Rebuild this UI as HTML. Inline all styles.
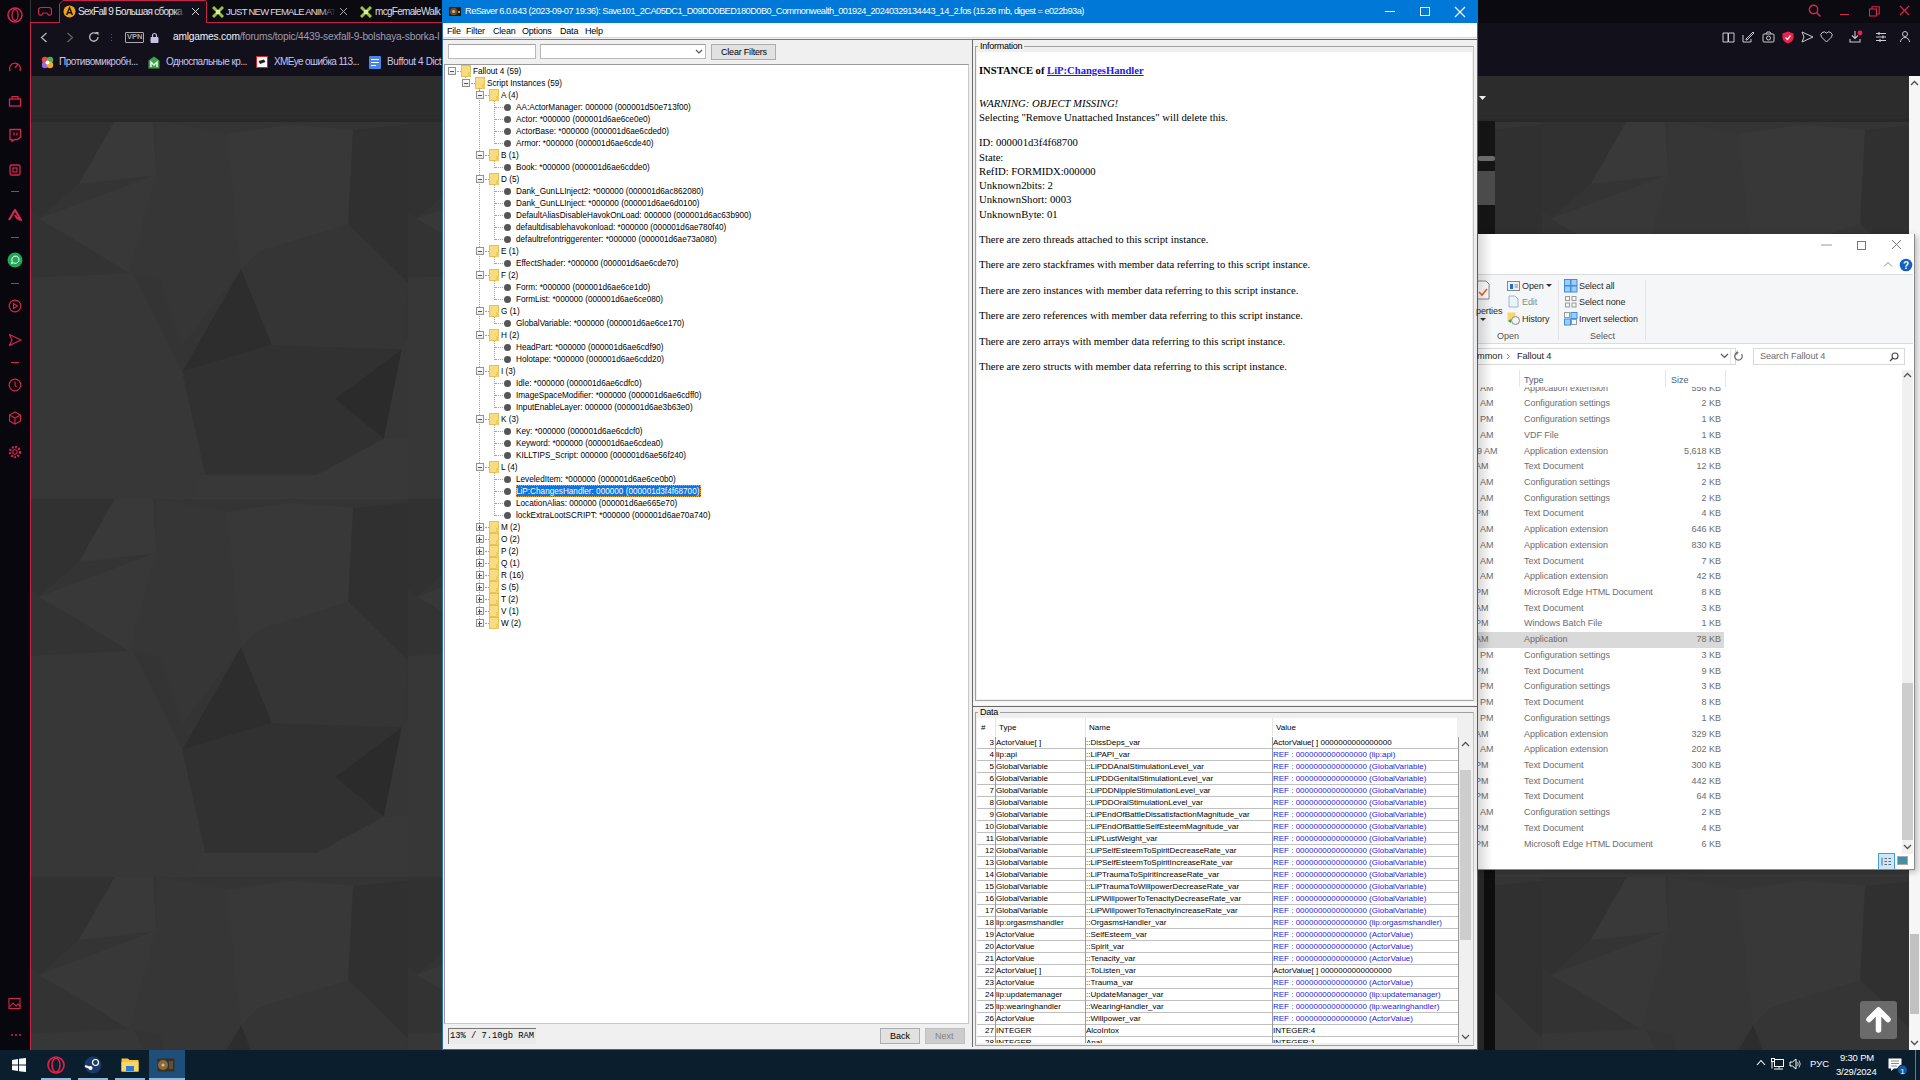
<!DOCTYPE html>
<html><head><meta charset="utf-8">
<style>
*{margin:0;padding:0;box-sizing:border-box}
html,body{width:1920px;height:1080px;overflow:hidden;background:#333;font-family:"Liberation Sans",sans-serif}
.a{position:absolute}
div,span{white-space:nowrap}
.t{position:absolute;line-height:12px}
</style></head><body>

<div class="a" style="left:30px;top:76px;width:1890px;height:974px;background:#343434;overflow:hidden">
<svg class="a" style="left:0;top:0" width="1890" height="974"><defs><pattern id="pp" patternUnits="userSpaceOnUse" x="0" y="45" width="378" height="378">
<rect width="378" height="378" fill="#343434"/>
<polygon fill="#313131" points="0,0 85,0 49,63 9,98 0,90"/>
<polygon fill="#393939" points="49,63 126,54 123,0 85,0"/>
<polygon fill="#383838" points="9,98 126,54 99,152 49,121"/>
<polygon fill="#363636" points="126,0 197,13 211,148 152,224 130,157 99,152 126,54"/>
<polygon fill="#383838" points="197,13 260,4 323,9 318,103 229,130 211,148"/>
<polygon fill="#303030" points="323,9 412,0 412,157 377,161 318,103"/>
<polygon fill="#353535" points="211,148 229,130 318,103 377,161 372,228 242,224"/>
<polygon fill="#2d2d2d" points="211,148 242,224 152,251"/>
<polygon fill="#313131" points="152,251 242,224 372,228 354,318 287,354 175,354"/>
<polygon fill="#2b2b2b" points="305,278 372,228 354,318"/>
<polygon fill="#373737" points="0,157 103,152 152,251 175,354 117,439 0,439"/>
<polygon fill="#383838" points="175,354 287,354 354,318 412,314 412,439 117,439"/>
<polygon fill="#333333" points="0,90 9,98 49,121 99,152 103,152 0,157"/>
<polygon fill="#363636" points="372,228 412,157 412,314 354,318"/>
</pattern></defs><rect x="0" y="45" width="1890" height="929" fill="url(#pp)"/>
<rect x="0" y="0" width="1890" height="45" fill="#2c2c2c"/><rect x="0" y="43" width="1890" height="3" fill="#292929"/></svg></div>
<div class="a" style="left:0;top:0;width:30px;height:1050px;background:#08070d"></div>
<div class="a" style="left:30px;top:22px;width:1px;height:1028px;background:#c8214a"></div>
<div class="a" style="left:31px;top:0;width:1889px;height:23px;background:#0b0a11"></div>
<div class="a" style="left:31px;top:23px;width:1889px;height:53px;background:#12111b"></div>
<div class="a" style="left:30px;top:22px;width:29px;height:1px;background:#c8214a"></div>
<div class="a" style="left:206px;top:22px;width:240px;height:1px;background:#c8214a"></div>
<svg class="a" style="left:59px;top:0px" width="148" height="23"><path d="M0.5 23V4L4 0.5H146.5L147.5 1.5V23" fill="#12111b" stroke="#c8214a" stroke-width="1"/></svg>
<svg class="a" style="left:7px;top:7px" width="16" height="16"><ellipse cx="8" cy="8" rx="7" ry="7" stroke="#d8264f" stroke-width="1.5" fill="none"/><ellipse cx="8" cy="8" rx="3" ry="5.5" stroke="#d8264f" stroke-width="1.3" fill="none"/></svg>
<svg class="a" style="left:8px;top:60px" width="14" height="14"><path d="M2 11A5.5 5.5 0 1 1 12 11" stroke="#d8264f" stroke-width="1.3" fill="none"/><path d="M7 8L10 4" stroke="#d8264f" stroke-width="1.3"/></svg>
<svg class="a" style="left:8px;top:94px" width="14" height="14"><rect x="1.5" y="5" width="11" height="7" stroke="#d8264f" stroke-width="1.3" fill="none"/><path d="M4 5V2.5H10V5" stroke="#d8264f" stroke-width="1.2" fill="none"/></svg>
<svg class="a" style="left:8px;top:128px" width="14" height="14"><path d="M2 1.5H12.5V9L9.5 11.5H6.5L4 13.5V11.5H2Z" stroke="#d8264f" stroke-width="1.3" fill="none"/><path d="M6 4.5V7.5M9 4.5V7.5" stroke="#d8264f" stroke-width="1.3"/></svg>
<svg class="a" style="left:8px;top:163px" width="14" height="14"><rect x="2" y="2" width="10" height="10" rx="1.5" stroke="#d8264f" stroke-width="1.3" fill="none"/><rect x="5" y="5" width="4" height="4" stroke="#d8264f" stroke-width="1.2" fill="none"/></svg>
<div class="a" style="left:11px;top:191px;width:8px;height:1px;background:#d8264f"></div>
<svg class="a" style="left:8px;top:208px" width="14" height="14"><path d="M1 12L7 2L13 12L9 10L7 7" stroke="#d8264f" stroke-width="2.2" fill="none" stroke-linejoin="round"/></svg>
<div class="a" style="left:11px;top:237px;width:8px;height:1px;background:#d8264f"></div>
<svg class="a" style="left:7px;top:252px" width="16" height="16"><circle cx="8" cy="8" r="7.5" fill="#1fa855"/><path d="M4.5 11.5L5.2 9.3A3.6 3.6 0 1 1 6.6 10.8Z" stroke="#fff" stroke-width="1" fill="none"/></svg>
<div class="a" style="left:11px;top:283px;width:8px;height:1px;background:#d8264f"></div>
<svg class="a" style="left:8px;top:299px" width="14" height="14"><circle cx="7" cy="7" r="5.8" stroke="#d8264f" stroke-width="1.2" fill="none"/><path d="M5.5 4.5L9.5 7L5.5 9.5Z" stroke="#d8264f" stroke-width="1.1" fill="none"/></svg>
<svg class="a" style="left:8px;top:333px" width="14" height="14"><path d="M1.5 1.5L13 7L1.5 12.5L4 7Z" stroke="#d8264f" stroke-width="1.2" fill="none" stroke-linejoin="round"/></svg>
<div class="a" style="left:11px;top:362px;width:8px;height:1px;background:#d8264f"></div>
<svg class="a" style="left:8px;top:378px" width="14" height="14"><circle cx="7" cy="7" r="5.8" stroke="#d8264f" stroke-width="1.2" fill="none"/><path d="M7 3.5V7L8.5 9" stroke="#d8264f" stroke-width="1.2" fill="none"/></svg>
<svg class="a" style="left:8px;top:411px" width="14" height="14"><path d="M7 1L12.5 4V10L7 13L1.5 10V4Z M1.5 4L7 7L12.5 4 M7 7V13" stroke="#d8264f" stroke-width="1.1" fill="none"/></svg>
<svg class="a" style="left:8px;top:445px" width="14" height="14"><circle cx="7" cy="7" r="2.2" stroke="#d8264f" stroke-width="1.1" fill="none"/><circle cx="7" cy="7" r="5" stroke="#d8264f" stroke-width="2.4" stroke-dasharray="1.8 1.5" fill="none"/></svg>
<svg class="a" style="left:8px;top:997px" width="14" height="13"><rect x="1" y="1.5" width="11" height="10" stroke="#d8264f" stroke-width="1.1" fill="none"/><path d="M1.5 10L5 6L8 9L10 7L12.5 9.5" stroke="#d8264f" stroke-width="1.1" fill="none"/></svg>
<div class="a" style="left:11px;top:1034px;width:2px;height:2px;background:#d8264f;border-radius:1px"></div>
<div class="a" style="left:15px;top:1034px;width:2px;height:2px;background:#d8264f;border-radius:1px"></div>
<div class="a" style="left:19px;top:1034px;width:2px;height:2px;background:#d8264f;border-radius:1px"></div>
<svg class="a" style="left:38px;top:6px" width="14" height="10"><path d="M3 1.5H11A2.5 2.5 0 0 1 13.5 4V7A2 2 0 0 1 10 8.5L9 7H5L4 8.5A2 2 0 0 1 0.5 7V4A2.5 2.5 0 0 1 3 1.5Z" stroke="#d8264f" stroke-width="1.2" fill="none"/></svg>
<svg class="a" style="left:63px;top:5px" width="13" height="13"><circle cx="6.5" cy="6.5" r="6" fill="#f4a20c"/><path d="M3.6 10L6.5 2.8L9.4 10M4.6 7.8H8.4" stroke="#111" stroke-width="1.4" fill="none"/></svg>
<div class="t" style="left:78px;top:6px;width:106px;overflow:hidden;font-size:10px;letter-spacing:-0.72px;color:#e2e2ea">SexFall 9 Большая сборка /</div>
<div class="a" style="left:174px;top:2px;width:12px;height:18px;background:linear-gradient(90deg,rgba(18,17,27,0),#12111b)"></div>
<svg class="a" style="left:191px;top:7px" width="9" height="9"><path d="M1 1L8 8M8 1L1 8" stroke="#ddd" stroke-width="1"/></svg>
<svg class="a" style="left:212px;top:6px" width="12" height="12"><path d="M1 1L11 11M11 1L1 11" stroke="#9ac23c" stroke-width="3"/><rect x="4" y="4" width="4" height="4" fill="#dfe9b0"/></svg>
<div class="t" style="left:226px;top:6px;width:110px;overflow:hidden;font-size:9.5px;letter-spacing:-0.75px;color:#dcdce4">JUST NEW FEMALE ANIMATIONS</div>
<div class="a" style="left:320px;top:2px;width:16px;height:18px;background:linear-gradient(90deg,rgba(11,10,17,0),#0b0a11)"></div>
<svg class="a" style="left:339px;top:7px" width="9" height="9"><path d="M1 1L8 8M8 1L1 8" stroke="#aaa" stroke-width="1"/></svg>
<svg class="a" style="left:360px;top:6px" width="12" height="12"><path d="M1 1L11 11M11 1L1 11" stroke="#9ac23c" stroke-width="3"/><rect x="4" y="4" width="4" height="4" fill="#dfe9b0"/></svg>
<div class="t" style="left:375px;top:6px;font-size:10px;letter-spacing:-0.7px;color:#dcdce4">mcgFemaleWalk</div>
<svg class="a" style="left:40px;top:32px" width="8" height="11"><path d="M6.5 1L1.5 5.5L6.5 10" stroke="#bbb" stroke-width="1.2" fill="none"/></svg>
<svg class="a" style="left:66px;top:32px" width="8" height="11"><path d="M1.5 1L6.5 5.5L1.5 10" stroke="#666" stroke-width="1.2" fill="none"/></svg>
<svg class="a" style="left:88px;top:31px" width="12" height="12"><path d="M10 6A4.2 4.2 0 1 1 8.5 2.8" stroke="#bbb" stroke-width="1.3" fill="none"/><path d="M7 1H10.5V4.5Z" fill="#bbb"/></svg>
<div class="a" style="left:111px;top:34px;width:1px;height:1px;background:#555"></div>
<div class="a" style="left:111px;top:37px;width:1px;height:1px;background:#555"></div>
<div class="a" style="left:111px;top:40px;width:1px;height:1px;background:#555"></div>
<div class="a" style="left:125px;top:32px;width:19px;height:11px;border:1px solid #aaa;border-radius:1px"></div>
<div class="t" style="left:127px;top:31px;font-size:7.5px;font-weight:bold;color:#aaa">VPN</div>
<svg class="a" style="left:150px;top:32px" width="9" height="11"><path d="M2.5 5V3.5A2 2 0 0 1 6.5 3.5V5" stroke="#c9c0e6" stroke-width="1.2" fill="none"/><rect x="0.5" y="5" width="8" height="6" rx="1" fill="#c9c0e6"/></svg>
<div class="t" style="left:173px;top:31px;font-size:10.2px;letter-spacing:-0.2px;color:#9f9cb2"><span style="color:#f2f2f6">amlgames.com</span>/forums/topic/4439-sexfall-9-bolshaya-sborka-l</div>
<svg class="a" style="left:41px;top:56px" width="13" height="13"><circle cx="4" cy="4" r="3.2" fill="#e84d3d"/><circle cx="9" cy="4" r="3.2" fill="#4caf50"/><circle cx="4" cy="9" r="3.2" fill="#9c6ad8"/><circle cx="9" cy="9" r="3.2" fill="#f5a623"/><circle cx="6.5" cy="6.5" r="2" fill="#fff"/></svg>
<div class="t" style="left:59px;top:56px;font-size:10px;letter-spacing:-0.45px;color:#c8c3ef">Противомикробн...</div>
<svg class="a" style="left:148px;top:56px" width="12" height="13"><path d="M6 0.5L11.5 4.5V12.5H0.5V4.5Z" fill="#3ea34a"/><path d="M3 11V6L6 9L9 6V11" stroke="#fff" stroke-width="1.3" fill="none"/></svg>
<div class="t" style="left:166px;top:56px;font-size:10px;letter-spacing:-0.55px;color:#c8c3ef">Односпальные кр...</div>
<div class="a" style="left:256px;top:56px;width:12px;height:12px;background:#fff;border:1px solid #d22"></div>
<svg class="a" style="left:258px;top:59px" width="8" height="6"><path d="M0.5 2L6 0.5L7.5 3L2 5Z" fill="#222"/></svg>
<div class="t" style="left:274px;top:56px;font-size:10px;letter-spacing:-0.65px;color:#c8c3ef">XMEye ошибка 113...</div>
<div class="a" style="left:369px;top:56px;width:12px;height:13px;background:#4a86e8;border-radius:1px"></div>
<div class="a" style="left:371px;top:59px;width:8px;height:1px;background:#fff"></div>
<div class="a" style="left:371px;top:62px;width:8px;height:1px;background:#fff"></div>
<div class="a" style="left:371px;top:65px;width:5px;height:1px;background:#fff"></div>
<div class="t" style="left:387px;top:56px;font-size:10px;letter-spacing:-0.4px;color:#c8c3ef">Buffout 4 Dict</div>
<svg class="a" style="left:1808px;top:4px" width="14" height="14"><circle cx="5.5" cy="5.5" r="4.2" stroke="#d8264f" stroke-width="1.4" fill="none"/><path d="M8.6 8.6L12.5 12.5" stroke="#d8264f" stroke-width="1.6"/></svg>
<div class="a" style="left:1840px;top:14px;width:9px;height:1px;background:#d8264f"></div>
<svg class="a" style="left:1869px;top:6px" width="11" height="11"><rect x="0.5" y="3" width="7" height="7" stroke="#d8264f" stroke-width="1.1" fill="none"/><path d="M3 3V0.8H10.2V8H7.8" stroke="#d8264f" stroke-width="1.1" fill="none"/></svg>
<svg class="a" style="left:1899px;top:5px" width="11" height="11"><path d="M1 1L10 10M10 1L1 10" stroke="#d8264f" stroke-width="1.2"/></svg>
<svg class="a" style="left:1722px;top:31px" width="13" height="12"><path d="M1 2H6V11H1Z M6.5 2H12V11H6.5Z" stroke="#c9c9d1" stroke-width="1" fill="none"/></svg>
<svg class="a" style="left:1742px;top:31px" width="13" height="12"><path d="M1 4V11H9V8" stroke="#c9c9d1" stroke-width="1" fill="none"/><path d="M4 8L11 1L12 2L5 9H4Z" stroke="#c9c9d1" stroke-width="1" fill="none"/></svg>
<svg class="a" style="left:1762px;top:31px" width="13" height="12"><rect x="1" y="3" width="11" height="8" rx="1" stroke="#c9c9d1" stroke-width="1" fill="none"/><circle cx="6.5" cy="7" r="2" stroke="#c9c9d1" stroke-width="1" fill="none"/><path d="M4 3L5 1H8L9 3" stroke="#c9c9d1" stroke-width="1" fill="none"/></svg>
<svg class="a" style="left:1782px;top:31px" width="12" height="13"><path d="M6 0.5L11.5 2.5V6.5C11.5 9.5 9 11.5 6 12.5C3 11.5 0.5 9.5 0.5 6.5V2.5Z" fill="#f01f4b"/><path d="M3.5 6.5L5.5 8.5L8.5 4.5" stroke="#fff" stroke-width="1.3" fill="none"/></svg>
<svg class="a" style="left:1801px;top:31px" width="13" height="12"><path d="M1 1L12 6L1 11L3 6Z" stroke="#c9c9d1" stroke-width="1" fill="none" stroke-linejoin="round"/></svg>
<svg class="a" style="left:1820px;top:31px" width="13" height="12"><path d="M6.5 11L1.5 6A3 3 0 0 1 6.5 2.2A3 3 0 0 1 11.5 6Z" stroke="#c9c9d1" stroke-width="1" fill="none"/></svg>
<svg class="a" style="left:1849px;top:30px" width="14" height="14"><path d="M6 1V8M3 5.5L6 8.5L9 5.5M1 9V12H11V9" stroke="#c9c9d1" stroke-width="1.1" fill="none"/><circle cx="11" cy="3" r="2.4" fill="#f01f4b"/></svg>
<svg class="a" style="left:1875px;top:31px" width="12" height="12"><path d="M1 2.5H11M1 6H11M1 9.5H11" stroke="#c9c9d1" stroke-width="1"/><path d="M4 1V4M8 4.5V7.5M5 8V11" stroke="#c9c9d1" stroke-width="1.2"/></svg>
<svg class="a" style="left:1899px;top:30px" width="12" height="13"><circle cx="6" cy="4" r="2.5" stroke="#c9c9d1" stroke-width="1" fill="none"/><path d="M1.5 12A4.5 4.5 0 0 1 10.5 12" stroke="#c9c9d1" stroke-width="1" fill="none"/></svg>
<div class="a" style="left:1478px;top:121px;width:17px;height:113px;background:#141414"></div>
<div class="a" style="left:1478px;top:870px;width:6px;height:180px;background:#262626"></div>
<div class="a" style="left:1484px;top:870px;width:11px;height:180px;background:#0e0e0e"></div>
<div class="a" style="left:1478px;top:156px;width:17px;height:5px;background:#6a6a6a;border-radius:2px"></div>
<div class="a" style="left:1478px;top:171px;width:17px;height:34px;background:#4b4b4b"></div>
<svg class="a" style="left:1479px;top:96px" width="7" height="5"><path d="M0 0H7L3.5 4Z" fill="#eee"/></svg>
<div class="a" style="left:1909px;top:76px;width:11px;height:974px;background:#f6f6f6"></div>
<div class="a" style="left:1910px;top:934px;width:9px;height:80px;background:#c1c1c1"></div>
<svg class="a" style="left:1910px;top:1040px" width="9" height="6"><path d="M1 1L4.5 4.5L8 1" stroke="#505050" stroke-width="1.4" fill="none"/></svg>
<svg class="a" style="left:1910px;top:80px" width="9" height="6"><path d="M1 5L4.5 1.5L8 5" stroke="#505050" stroke-width="1.4" fill="none"/></svg>
<div class="a" style="left:1860px;top:1001px;width:37px;height:38px;background:#6b6b6b;border-radius:3px"></div>
<svg class="a" style="left:1864px;top:1006px" width="29" height="28"><path d="M14.5 4L5 13.5M14.5 4L24 13.5M14.5 5V24" stroke="#fff" stroke-width="5.5" stroke-linecap="round" stroke-linejoin="round" fill="none"/></svg>
<div class="a" style="left:442px;top:0;width:1036px;height:1050px;background:#f0f0f0;border:1px solid #2a6cb0;border-top:none"></div>
<div class="a" style="left:442px;top:0;width:1036px;height:23px;background:#0078d7"></div>
<svg class="a" style="left:449px;top:7px" width="12" height="9"><rect width="12" height="9" fill="#241c12"/><circle cx="4.6" cy="4.5" r="3.8" fill="#6e4c24"/><circle cx="4.6" cy="4.5" r="1.6" fill="#c8b488"/><rect x="9" y="4" width="2" height="2" fill="#a89878"/></svg>
<div class="t" style="left:465px;top:5px;font-size:9.2px;letter-spacing:-0.5px;color:#fff">ReSaver 6.0.643 (2023-09-07 19:36): Save101_2CA05DC1_D09DD0BED180D0B0_Commonwealth_001924_20240329134443_14_2.fos (15.26 mb, digest = e022b93a)</div>
<div class="a" style="left:1385px;top:11px;width:10px;height:1px;background:#fff"></div>
<div class="a" style="left:1420px;top:7px;width:10px;height:9px;border:1px solid #fff"></div>
<svg class="a" style="left:1454px;top:6px" width="12" height="12"><path d="M1 1L11 11M11 1L1 11" stroke="#fff" stroke-width="1.1"/></svg>
<div class="a" style="left:443px;top:23px;width:1034px;height:15px;background:#fff"></div>
<div class="a" style="left:443px;top:37px;width:1034px;height:1px;background:#d8d8d8"></div>
<div class="a" style="left:443px;top:39px;width:1030px;height:1px;background:#7a7a7a"></div>
<div class="t" style="left:447px;top:25px;font-size:9px;letter-spacing:-0.2px;color:#000">File</div>
<div class="t" style="left:466px;top:25px;font-size:9px;letter-spacing:-0.2px;color:#000">Filter</div>
<div class="t" style="left:493px;top:25px;font-size:9px;letter-spacing:-0.2px;color:#000">Clean</div>
<div class="t" style="left:522px;top:25px;font-size:9px;letter-spacing:-0.2px;color:#000">Options</div>
<div class="t" style="left:560px;top:25px;font-size:9px;letter-spacing:-0.2px;color:#000">Data</div>
<div class="t" style="left:585px;top:25px;font-size:9px;letter-spacing:-0.2px;color:#000">Help</div>
<div class="a" style="left:448px;top:44px;width:88px;height:15px;background:#fff;border:1px solid #b9b9b9;border-top-color:#a0a0a0"></div>
<div class="a" style="left:540px;top:44px;width:166px;height:15px;background:#fff;border:1px solid #b9b9b9;border-top-color:#a0a0a0"></div>
<svg class="a" style="left:695px;top:49px" width="8" height="6"><path d="M1 1L4 4L7 1" stroke="#555" stroke-width="1.2" fill="none"/></svg>
<div class="a" style="left:711px;top:44px;width:65px;height:16px;background:#e1e1e1;border:1px solid #adadad"></div>
<div class="t" style="left:721px;top:46px;font-size:9px;letter-spacing:-0.2px;color:#000">Clear Filters</div>
<div class="a" style="left:444px;top:64px;width:525px;height:960px;background:#fff;border:1px solid #9a9a9a;border-right-color:#c8c8c8;border-bottom-color:#c8c8c8"></div>
<div class="a" style="left:972px;top:39px;width:1px;height:1008px;background:#6a6a6a"></div>
<div class="a" style="left:973px;top:39px;width:504px;height:1px;background:#6a6a6a"></div>
<div class="a" style="left:448px;top:1028px;width:88px;height:16px;background:#eaeaea;border-left:1px solid #777;border-top:1px solid #777"></div>
<div class="t" style="left:450px;top:1030px;font-family:'Liberation Mono',monospace;font-size:8.75px;color:#000">13% / 7.10gb RAM</div>
<div class="a" style="left:880px;top:1028px;width:40px;height:16px;background:#e1e1e1;border:1px solid #adadad"></div>
<div class="t" style="left:890px;top:1030px;font-size:9px;color:#000">Back</div>
<div class="a" style="left:925px;top:1028px;width:40px;height:16px;background:#cccccc;border:1px solid #bfbfbf"></div>
<div class="t" style="left:935px;top:1030px;font-size:9px;color:#838383">Next</div>
<div class="a" style="left:465px;top:77px;width:1px;height:3px;border-left:1px dotted #a0a0a0"></div>
<div class="a" style="left:479px;top:89px;width:1px;height:534px;border-left:1px dotted #a0a0a0"></div>
<div class="a" style="left:494px;top:101px;width:1px;height:43px;border-left:1px dotted #a0a0a0"></div>
<div class="a" style="left:494px;top:161px;width:1px;height:7px;border-left:1px dotted #a0a0a0"></div>
<div class="a" style="left:494px;top:185px;width:1px;height:55px;border-left:1px dotted #a0a0a0"></div>
<div class="a" style="left:494px;top:257px;width:1px;height:7px;border-left:1px dotted #a0a0a0"></div>
<div class="a" style="left:494px;top:281px;width:1px;height:19px;border-left:1px dotted #a0a0a0"></div>
<div class="a" style="left:494px;top:317px;width:1px;height:7px;border-left:1px dotted #a0a0a0"></div>
<div class="a" style="left:494px;top:341px;width:1px;height:19px;border-left:1px dotted #a0a0a0"></div>
<div class="a" style="left:494px;top:377px;width:1px;height:31px;border-left:1px dotted #a0a0a0"></div>
<div class="a" style="left:494px;top:425px;width:1px;height:31px;border-left:1px dotted #a0a0a0"></div>
<div class="a" style="left:494px;top:473px;width:1px;height:43px;border-left:1px dotted #a0a0a0"></div>
<div class="a" style="left:448px;top:67px;width:8px;height:8px;border:1px solid #919191;background:linear-gradient(#fff,#e8e8e8)"></div>
<div class="a" style="left:450px;top:71px;width:4px;height:1px;background:#3a52a8"></div>
<div class="a" style="left:457px;top:71px;width:4px;height:1px;border-top:1px dotted #a0a0a0"></div>
<div class="a" style="left:461px;top:65px;width:10px;height:12px;background:#f9dc80;border:1px solid #e6bf55"></div>
<div class="a" style="left:468px;top:72px;width:3px;height:5px;background:#efcb61"></div>
<div class="t" style="left:473px;top:66px;font-size:8.2px;color:#000">Fallout 4 (59)</div>
<div class="a" style="left:462px;top:79px;width:8px;height:8px;border:1px solid #919191;background:linear-gradient(#fff,#e8e8e8)"></div>
<div class="a" style="left:464px;top:83px;width:4px;height:1px;background:#3a52a8"></div>
<div class="a" style="left:471px;top:83px;width:4px;height:1px;border-top:1px dotted #a0a0a0"></div>
<div class="a" style="left:475px;top:77px;width:10px;height:12px;background:#f9dc80;border:1px solid #e6bf55"></div>
<div class="a" style="left:482px;top:84px;width:3px;height:5px;background:#efcb61"></div>
<div class="t" style="left:487px;top:78px;font-size:8.2px;color:#000">Script Instances (59)</div>
<div class="a" style="left:476px;top:91px;width:8px;height:8px;border:1px solid #919191;background:linear-gradient(#fff,#e8e8e8)"></div>
<div class="a" style="left:478px;top:95px;width:4px;height:1px;background:#3a52a8"></div>
<div class="a" style="left:485px;top:95px;width:4px;height:1px;border-top:1px dotted #a0a0a0"></div>
<div class="a" style="left:489px;top:89px;width:10px;height:12px;background:#f9dc80;border:1px solid #e6bf55"></div>
<div class="a" style="left:496px;top:96px;width:3px;height:5px;background:#efcb61"></div>
<div class="t" style="left:501px;top:90px;font-size:8.2px;color:#000">A (4)</div>
<div class="a" style="left:495px;top:107px;width:8px;height:1px;border-top:1px dotted #a0a0a0"></div>
<div class="a" style="left:504px;top:104px;width:7px;height:7px;border-radius:50%;background:#555"></div>
<div class="t" style="left:516px;top:102px;font-size:8.2px;color:#000">AA:ActorManager: 000000 (000001d50e713f00)</div>
<div class="a" style="left:495px;top:119px;width:8px;height:1px;border-top:1px dotted #a0a0a0"></div>
<div class="a" style="left:504px;top:116px;width:7px;height:7px;border-radius:50%;background:#555"></div>
<div class="t" style="left:516px;top:114px;font-size:8.2px;color:#000">Actor: *000000 (000001d6ae6ce0e0)</div>
<div class="a" style="left:495px;top:131px;width:8px;height:1px;border-top:1px dotted #a0a0a0"></div>
<div class="a" style="left:504px;top:128px;width:7px;height:7px;border-radius:50%;background:#555"></div>
<div class="t" style="left:516px;top:126px;font-size:8.2px;color:#000">ActorBase: *000000 (000001d6ae6cded0)</div>
<div class="a" style="left:495px;top:143px;width:8px;height:1px;border-top:1px dotted #a0a0a0"></div>
<div class="a" style="left:504px;top:140px;width:7px;height:7px;border-radius:50%;background:#555"></div>
<div class="t" style="left:516px;top:138px;font-size:8.2px;color:#000">Armor: *000000 (000001d6ae6cde40)</div>
<div class="a" style="left:476px;top:151px;width:8px;height:8px;border:1px solid #919191;background:linear-gradient(#fff,#e8e8e8)"></div>
<div class="a" style="left:478px;top:155px;width:4px;height:1px;background:#3a52a8"></div>
<div class="a" style="left:485px;top:155px;width:4px;height:1px;border-top:1px dotted #a0a0a0"></div>
<div class="a" style="left:489px;top:149px;width:10px;height:12px;background:#f9dc80;border:1px solid #e6bf55"></div>
<div class="a" style="left:496px;top:156px;width:3px;height:5px;background:#efcb61"></div>
<div class="t" style="left:501px;top:150px;font-size:8.2px;color:#000">B (1)</div>
<div class="a" style="left:495px;top:167px;width:8px;height:1px;border-top:1px dotted #a0a0a0"></div>
<div class="a" style="left:504px;top:164px;width:7px;height:7px;border-radius:50%;background:#555"></div>
<div class="t" style="left:516px;top:162px;font-size:8.2px;color:#000">Book: *000000 (000001d6ae6cdde0)</div>
<div class="a" style="left:476px;top:175px;width:8px;height:8px;border:1px solid #919191;background:linear-gradient(#fff,#e8e8e8)"></div>
<div class="a" style="left:478px;top:179px;width:4px;height:1px;background:#3a52a8"></div>
<div class="a" style="left:485px;top:179px;width:4px;height:1px;border-top:1px dotted #a0a0a0"></div>
<div class="a" style="left:489px;top:173px;width:10px;height:12px;background:#f9dc80;border:1px solid #e6bf55"></div>
<div class="a" style="left:496px;top:180px;width:3px;height:5px;background:#efcb61"></div>
<div class="t" style="left:501px;top:174px;font-size:8.2px;color:#000">D (5)</div>
<div class="a" style="left:495px;top:191px;width:8px;height:1px;border-top:1px dotted #a0a0a0"></div>
<div class="a" style="left:504px;top:188px;width:7px;height:7px;border-radius:50%;background:#555"></div>
<div class="t" style="left:516px;top:186px;font-size:8.2px;color:#000">Dank_GunLLInject2: *000000 (000001d6ac862080)</div>
<div class="a" style="left:495px;top:203px;width:8px;height:1px;border-top:1px dotted #a0a0a0"></div>
<div class="a" style="left:504px;top:200px;width:7px;height:7px;border-radius:50%;background:#555"></div>
<div class="t" style="left:516px;top:198px;font-size:8.2px;color:#000">Dank_GunLLInject: *000000 (000001d6ae6d0100)</div>
<div class="a" style="left:495px;top:215px;width:8px;height:1px;border-top:1px dotted #a0a0a0"></div>
<div class="a" style="left:504px;top:212px;width:7px;height:7px;border-radius:50%;background:#555"></div>
<div class="t" style="left:516px;top:210px;font-size:8.2px;color:#000">DefaultAliasDisableHavokOnLoad: 000000 (000001d6ac63b900)</div>
<div class="a" style="left:495px;top:227px;width:8px;height:1px;border-top:1px dotted #a0a0a0"></div>
<div class="a" style="left:504px;top:224px;width:7px;height:7px;border-radius:50%;background:#555"></div>
<div class="t" style="left:516px;top:222px;font-size:8.2px;color:#000">defaultdisablehavokonload: *000000 (000001d6ae780f40)</div>
<div class="a" style="left:495px;top:239px;width:8px;height:1px;border-top:1px dotted #a0a0a0"></div>
<div class="a" style="left:504px;top:236px;width:7px;height:7px;border-radius:50%;background:#555"></div>
<div class="t" style="left:516px;top:234px;font-size:8.2px;color:#000">defaultrefontriggerenter: *000000 (000001d6ae73a080)</div>
<div class="a" style="left:476px;top:247px;width:8px;height:8px;border:1px solid #919191;background:linear-gradient(#fff,#e8e8e8)"></div>
<div class="a" style="left:478px;top:251px;width:4px;height:1px;background:#3a52a8"></div>
<div class="a" style="left:485px;top:251px;width:4px;height:1px;border-top:1px dotted #a0a0a0"></div>
<div class="a" style="left:489px;top:245px;width:10px;height:12px;background:#f9dc80;border:1px solid #e6bf55"></div>
<div class="a" style="left:496px;top:252px;width:3px;height:5px;background:#efcb61"></div>
<div class="t" style="left:501px;top:246px;font-size:8.2px;color:#000">E (1)</div>
<div class="a" style="left:495px;top:263px;width:8px;height:1px;border-top:1px dotted #a0a0a0"></div>
<div class="a" style="left:504px;top:260px;width:7px;height:7px;border-radius:50%;background:#555"></div>
<div class="t" style="left:516px;top:258px;font-size:8.2px;color:#000">EffectShader: *000000 (000001d6ae6cde70)</div>
<div class="a" style="left:476px;top:271px;width:8px;height:8px;border:1px solid #919191;background:linear-gradient(#fff,#e8e8e8)"></div>
<div class="a" style="left:478px;top:275px;width:4px;height:1px;background:#3a52a8"></div>
<div class="a" style="left:485px;top:275px;width:4px;height:1px;border-top:1px dotted #a0a0a0"></div>
<div class="a" style="left:489px;top:269px;width:10px;height:12px;background:#f9dc80;border:1px solid #e6bf55"></div>
<div class="a" style="left:496px;top:276px;width:3px;height:5px;background:#efcb61"></div>
<div class="t" style="left:501px;top:270px;font-size:8.2px;color:#000">F (2)</div>
<div class="a" style="left:495px;top:287px;width:8px;height:1px;border-top:1px dotted #a0a0a0"></div>
<div class="a" style="left:504px;top:284px;width:7px;height:7px;border-radius:50%;background:#555"></div>
<div class="t" style="left:516px;top:282px;font-size:8.2px;color:#000">Form: *000000 (000001d6ae6ce1d0)</div>
<div class="a" style="left:495px;top:299px;width:8px;height:1px;border-top:1px dotted #a0a0a0"></div>
<div class="a" style="left:504px;top:296px;width:7px;height:7px;border-radius:50%;background:#555"></div>
<div class="t" style="left:516px;top:294px;font-size:8.2px;color:#000">FormList: *000000 (000001d6ae6ce080)</div>
<div class="a" style="left:476px;top:307px;width:8px;height:8px;border:1px solid #919191;background:linear-gradient(#fff,#e8e8e8)"></div>
<div class="a" style="left:478px;top:311px;width:4px;height:1px;background:#3a52a8"></div>
<div class="a" style="left:485px;top:311px;width:4px;height:1px;border-top:1px dotted #a0a0a0"></div>
<div class="a" style="left:489px;top:305px;width:10px;height:12px;background:#f9dc80;border:1px solid #e6bf55"></div>
<div class="a" style="left:496px;top:312px;width:3px;height:5px;background:#efcb61"></div>
<div class="t" style="left:501px;top:306px;font-size:8.2px;color:#000">G (1)</div>
<div class="a" style="left:495px;top:323px;width:8px;height:1px;border-top:1px dotted #a0a0a0"></div>
<div class="a" style="left:504px;top:320px;width:7px;height:7px;border-radius:50%;background:#555"></div>
<div class="t" style="left:516px;top:318px;font-size:8.2px;color:#000">GlobalVariable: *000000 (000001d6ae6ce170)</div>
<div class="a" style="left:476px;top:331px;width:8px;height:8px;border:1px solid #919191;background:linear-gradient(#fff,#e8e8e8)"></div>
<div class="a" style="left:478px;top:335px;width:4px;height:1px;background:#3a52a8"></div>
<div class="a" style="left:485px;top:335px;width:4px;height:1px;border-top:1px dotted #a0a0a0"></div>
<div class="a" style="left:489px;top:329px;width:10px;height:12px;background:#f9dc80;border:1px solid #e6bf55"></div>
<div class="a" style="left:496px;top:336px;width:3px;height:5px;background:#efcb61"></div>
<div class="t" style="left:501px;top:330px;font-size:8.2px;color:#000">H (2)</div>
<div class="a" style="left:495px;top:347px;width:8px;height:1px;border-top:1px dotted #a0a0a0"></div>
<div class="a" style="left:504px;top:344px;width:7px;height:7px;border-radius:50%;background:#555"></div>
<div class="t" style="left:516px;top:342px;font-size:8.2px;color:#000">HeadPart: *000000 (000001d6ae6cdf90)</div>
<div class="a" style="left:495px;top:359px;width:8px;height:1px;border-top:1px dotted #a0a0a0"></div>
<div class="a" style="left:504px;top:356px;width:7px;height:7px;border-radius:50%;background:#555"></div>
<div class="t" style="left:516px;top:354px;font-size:8.2px;color:#000">Holotape: *000000 (000001d6ae6cdd20)</div>
<div class="a" style="left:476px;top:367px;width:8px;height:8px;border:1px solid #919191;background:linear-gradient(#fff,#e8e8e8)"></div>
<div class="a" style="left:478px;top:371px;width:4px;height:1px;background:#3a52a8"></div>
<div class="a" style="left:485px;top:371px;width:4px;height:1px;border-top:1px dotted #a0a0a0"></div>
<div class="a" style="left:489px;top:365px;width:10px;height:12px;background:#f9dc80;border:1px solid #e6bf55"></div>
<div class="a" style="left:496px;top:372px;width:3px;height:5px;background:#efcb61"></div>
<div class="t" style="left:501px;top:366px;font-size:8.2px;color:#000">I (3)</div>
<div class="a" style="left:495px;top:383px;width:8px;height:1px;border-top:1px dotted #a0a0a0"></div>
<div class="a" style="left:504px;top:380px;width:7px;height:7px;border-radius:50%;background:#555"></div>
<div class="t" style="left:516px;top:378px;font-size:8.2px;color:#000">Idle: *000000 (000001d6ae6cdfc0)</div>
<div class="a" style="left:495px;top:395px;width:8px;height:1px;border-top:1px dotted #a0a0a0"></div>
<div class="a" style="left:504px;top:392px;width:7px;height:7px;border-radius:50%;background:#555"></div>
<div class="t" style="left:516px;top:390px;font-size:8.2px;color:#000">ImageSpaceModifier: *000000 (000001d6ae6cdff0)</div>
<div class="a" style="left:495px;top:407px;width:8px;height:1px;border-top:1px dotted #a0a0a0"></div>
<div class="a" style="left:504px;top:404px;width:7px;height:7px;border-radius:50%;background:#555"></div>
<div class="t" style="left:516px;top:402px;font-size:8.2px;color:#000">InputEnableLayer: 000000 (000001d6ae3b63e0)</div>
<div class="a" style="left:476px;top:415px;width:8px;height:8px;border:1px solid #919191;background:linear-gradient(#fff,#e8e8e8)"></div>
<div class="a" style="left:478px;top:419px;width:4px;height:1px;background:#3a52a8"></div>
<div class="a" style="left:485px;top:419px;width:4px;height:1px;border-top:1px dotted #a0a0a0"></div>
<div class="a" style="left:489px;top:413px;width:10px;height:12px;background:#f9dc80;border:1px solid #e6bf55"></div>
<div class="a" style="left:496px;top:420px;width:3px;height:5px;background:#efcb61"></div>
<div class="t" style="left:501px;top:414px;font-size:8.2px;color:#000">K (3)</div>
<div class="a" style="left:495px;top:431px;width:8px;height:1px;border-top:1px dotted #a0a0a0"></div>
<div class="a" style="left:504px;top:428px;width:7px;height:7px;border-radius:50%;background:#555"></div>
<div class="t" style="left:516px;top:426px;font-size:8.2px;color:#000">Key: *000000 (000001d6ae6cdcf0)</div>
<div class="a" style="left:495px;top:443px;width:8px;height:1px;border-top:1px dotted #a0a0a0"></div>
<div class="a" style="left:504px;top:440px;width:7px;height:7px;border-radius:50%;background:#555"></div>
<div class="t" style="left:516px;top:438px;font-size:8.2px;color:#000">Keyword: *000000 (000001d6ae6cdea0)</div>
<div class="a" style="left:495px;top:455px;width:8px;height:1px;border-top:1px dotted #a0a0a0"></div>
<div class="a" style="left:504px;top:452px;width:7px;height:7px;border-radius:50%;background:#555"></div>
<div class="t" style="left:516px;top:450px;font-size:8.2px;color:#000">KILLTIPS_Script: 000000 (000001d6ae56f240)</div>
<div class="a" style="left:476px;top:463px;width:8px;height:8px;border:1px solid #919191;background:linear-gradient(#fff,#e8e8e8)"></div>
<div class="a" style="left:478px;top:467px;width:4px;height:1px;background:#3a52a8"></div>
<div class="a" style="left:485px;top:467px;width:4px;height:1px;border-top:1px dotted #a0a0a0"></div>
<div class="a" style="left:489px;top:461px;width:10px;height:12px;background:#f9dc80;border:1px solid #e6bf55"></div>
<div class="a" style="left:496px;top:468px;width:3px;height:5px;background:#efcb61"></div>
<div class="t" style="left:501px;top:462px;font-size:8.2px;color:#000">L (4)</div>
<div class="a" style="left:495px;top:479px;width:8px;height:1px;border-top:1px dotted #a0a0a0"></div>
<div class="a" style="left:504px;top:476px;width:7px;height:7px;border-radius:50%;background:#555"></div>
<div class="t" style="left:516px;top:474px;font-size:8.2px;color:#000">LeveledItem: *000000 (000001d6ae6ce0b0)</div>
<div class="a" style="left:495px;top:491px;width:8px;height:1px;border-top:1px dotted #a0a0a0"></div>
<div class="a" style="left:504px;top:488px;width:7px;height:7px;border-radius:50%;background:#555"></div>
<div class="a" style="left:516px;top:485px;width:185px;height:12px;background:#0f74e0;border:1px dotted #f0a030"></div>
<div class="t" style="left:516px;top:486px;font-size:8.2px;color:#fff">LiP:ChangesHandler: 000000 (000001d3f4f68700)</div>
<div class="a" style="left:495px;top:503px;width:8px;height:1px;border-top:1px dotted #a0a0a0"></div>
<div class="a" style="left:504px;top:500px;width:7px;height:7px;border-radius:50%;background:#555"></div>
<div class="t" style="left:516px;top:498px;font-size:8.2px;color:#000">LocationAlias: 000000 (000001d6ae665e70)</div>
<div class="a" style="left:495px;top:515px;width:8px;height:1px;border-top:1px dotted #a0a0a0"></div>
<div class="a" style="left:504px;top:512px;width:7px;height:7px;border-radius:50%;background:#555"></div>
<div class="t" style="left:516px;top:510px;font-size:8.2px;color:#000">lockExtraLootSCRIPT: *000000 (000001d6ae70a740)</div>
<div class="a" style="left:476px;top:523px;width:8px;height:8px;border:1px solid #919191;background:linear-gradient(#fff,#e8e8e8)"></div>
<div class="a" style="left:478px;top:527px;width:4px;height:1px;background:#3a52a8"></div>
<div class="a" style="left:479px;top:525px;width:1px;height:5px;background:#3a52a8"></div>
<div class="a" style="left:485px;top:527px;width:4px;height:1px;border-top:1px dotted #a0a0a0"></div>
<div class="a" style="left:489px;top:521px;width:10px;height:12px;background:#f9dc80;border:1px solid #e6bf55"></div>
<div class="a" style="left:496px;top:528px;width:3px;height:5px;background:#efcb61"></div>
<div class="t" style="left:501px;top:522px;font-size:8.2px;color:#000">M (2)</div>
<div class="a" style="left:476px;top:535px;width:8px;height:8px;border:1px solid #919191;background:linear-gradient(#fff,#e8e8e8)"></div>
<div class="a" style="left:478px;top:539px;width:4px;height:1px;background:#3a52a8"></div>
<div class="a" style="left:479px;top:537px;width:1px;height:5px;background:#3a52a8"></div>
<div class="a" style="left:485px;top:539px;width:4px;height:1px;border-top:1px dotted #a0a0a0"></div>
<div class="a" style="left:489px;top:533px;width:10px;height:12px;background:#f9dc80;border:1px solid #e6bf55"></div>
<div class="a" style="left:496px;top:540px;width:3px;height:5px;background:#efcb61"></div>
<div class="t" style="left:501px;top:534px;font-size:8.2px;color:#000">O (2)</div>
<div class="a" style="left:476px;top:547px;width:8px;height:8px;border:1px solid #919191;background:linear-gradient(#fff,#e8e8e8)"></div>
<div class="a" style="left:478px;top:551px;width:4px;height:1px;background:#3a52a8"></div>
<div class="a" style="left:479px;top:549px;width:1px;height:5px;background:#3a52a8"></div>
<div class="a" style="left:485px;top:551px;width:4px;height:1px;border-top:1px dotted #a0a0a0"></div>
<div class="a" style="left:489px;top:545px;width:10px;height:12px;background:#f9dc80;border:1px solid #e6bf55"></div>
<div class="a" style="left:496px;top:552px;width:3px;height:5px;background:#efcb61"></div>
<div class="t" style="left:501px;top:546px;font-size:8.2px;color:#000">P (2)</div>
<div class="a" style="left:476px;top:559px;width:8px;height:8px;border:1px solid #919191;background:linear-gradient(#fff,#e8e8e8)"></div>
<div class="a" style="left:478px;top:563px;width:4px;height:1px;background:#3a52a8"></div>
<div class="a" style="left:479px;top:561px;width:1px;height:5px;background:#3a52a8"></div>
<div class="a" style="left:485px;top:563px;width:4px;height:1px;border-top:1px dotted #a0a0a0"></div>
<div class="a" style="left:489px;top:557px;width:10px;height:12px;background:#f9dc80;border:1px solid #e6bf55"></div>
<div class="a" style="left:496px;top:564px;width:3px;height:5px;background:#efcb61"></div>
<div class="t" style="left:501px;top:558px;font-size:8.2px;color:#000">Q (1)</div>
<div class="a" style="left:476px;top:571px;width:8px;height:8px;border:1px solid #919191;background:linear-gradient(#fff,#e8e8e8)"></div>
<div class="a" style="left:478px;top:575px;width:4px;height:1px;background:#3a52a8"></div>
<div class="a" style="left:479px;top:573px;width:1px;height:5px;background:#3a52a8"></div>
<div class="a" style="left:485px;top:575px;width:4px;height:1px;border-top:1px dotted #a0a0a0"></div>
<div class="a" style="left:489px;top:569px;width:10px;height:12px;background:#f9dc80;border:1px solid #e6bf55"></div>
<div class="a" style="left:496px;top:576px;width:3px;height:5px;background:#efcb61"></div>
<div class="t" style="left:501px;top:570px;font-size:8.2px;color:#000">R (16)</div>
<div class="a" style="left:476px;top:583px;width:8px;height:8px;border:1px solid #919191;background:linear-gradient(#fff,#e8e8e8)"></div>
<div class="a" style="left:478px;top:587px;width:4px;height:1px;background:#3a52a8"></div>
<div class="a" style="left:479px;top:585px;width:1px;height:5px;background:#3a52a8"></div>
<div class="a" style="left:485px;top:587px;width:4px;height:1px;border-top:1px dotted #a0a0a0"></div>
<div class="a" style="left:489px;top:581px;width:10px;height:12px;background:#f9dc80;border:1px solid #e6bf55"></div>
<div class="a" style="left:496px;top:588px;width:3px;height:5px;background:#efcb61"></div>
<div class="t" style="left:501px;top:582px;font-size:8.2px;color:#000">S (5)</div>
<div class="a" style="left:476px;top:595px;width:8px;height:8px;border:1px solid #919191;background:linear-gradient(#fff,#e8e8e8)"></div>
<div class="a" style="left:478px;top:599px;width:4px;height:1px;background:#3a52a8"></div>
<div class="a" style="left:479px;top:597px;width:1px;height:5px;background:#3a52a8"></div>
<div class="a" style="left:485px;top:599px;width:4px;height:1px;border-top:1px dotted #a0a0a0"></div>
<div class="a" style="left:489px;top:593px;width:10px;height:12px;background:#f9dc80;border:1px solid #e6bf55"></div>
<div class="a" style="left:496px;top:600px;width:3px;height:5px;background:#efcb61"></div>
<div class="t" style="left:501px;top:594px;font-size:8.2px;color:#000">T (2)</div>
<div class="a" style="left:476px;top:607px;width:8px;height:8px;border:1px solid #919191;background:linear-gradient(#fff,#e8e8e8)"></div>
<div class="a" style="left:478px;top:611px;width:4px;height:1px;background:#3a52a8"></div>
<div class="a" style="left:479px;top:609px;width:1px;height:5px;background:#3a52a8"></div>
<div class="a" style="left:485px;top:611px;width:4px;height:1px;border-top:1px dotted #a0a0a0"></div>
<div class="a" style="left:489px;top:605px;width:10px;height:12px;background:#f9dc80;border:1px solid #e6bf55"></div>
<div class="a" style="left:496px;top:612px;width:3px;height:5px;background:#efcb61"></div>
<div class="t" style="left:501px;top:606px;font-size:8.2px;color:#000">V (1)</div>
<div class="a" style="left:476px;top:619px;width:8px;height:8px;border:1px solid #919191;background:linear-gradient(#fff,#e8e8e8)"></div>
<div class="a" style="left:478px;top:623px;width:4px;height:1px;background:#3a52a8"></div>
<div class="a" style="left:479px;top:621px;width:1px;height:5px;background:#3a52a8"></div>
<div class="a" style="left:485px;top:623px;width:4px;height:1px;border-top:1px dotted #a0a0a0"></div>
<div class="a" style="left:489px;top:617px;width:10px;height:12px;background:#f9dc80;border:1px solid #e6bf55"></div>
<div class="a" style="left:496px;top:624px;width:3px;height:5px;background:#efcb61"></div>
<div class="t" style="left:501px;top:618px;font-size:8.2px;color:#000">W (2)</div>
<div class="a" style="left:975px;top:46px;width:499px;height:655px;border:1px solid #a0a0a0;border-right-color:#c4c4c4;border-bottom-color:#a8a8a8"></div>
<div class="a" style="left:977px;top:48px;width:495px;height:651px;background:#fff"></div>
<div class="a" style="left:977px;top:48px;width:495px;height:4px;background:#efefef"></div>
<div class="a" style="left:978px;top:42px;padding:0 2px;height:8px;line-height:8px;background:#f0f0f0;font-size:9px;letter-spacing:-0.25px;color:#000">Information</div>
<div class="t" style="left:979px;top:64px;font-family:'Liberation Serif',serif;font-size:10.7px;color:#000;"><b style="font-size:10.6px">INSTANCE of <u style="color:#1a1aee">LiP:ChangesHandler</u></b></div>
<div class="t" style="left:979px;top:97px;font-family:'Liberation Serif',serif;font-size:10.7px;color:#000;"><i>WARNING: OBJECT MISSING!</i></div>
<div class="t" style="left:979px;top:111px;font-family:'Liberation Serif',serif;font-size:10.7px;color:#000;">Selecting "Remove Unattached Instances" will delete this.</div>
<div class="t" style="left:979px;top:136px;font-family:'Liberation Serif',serif;font-size:10.7px;color:#000;">ID: 000001d3f4f68700</div>
<div class="t" style="left:979px;top:151px;font-family:'Liberation Serif',serif;font-size:10.7px;color:#000;">State:</div>
<div class="t" style="left:979px;top:165px;font-family:'Liberation Serif',serif;font-size:10.7px;color:#000;">RefID: FORMIDX:000000</div>
<div class="t" style="left:979px;top:179px;font-family:'Liberation Serif',serif;font-size:10.7px;color:#000;">Unknown2bits: 2</div>
<div class="t" style="left:979px;top:193px;font-family:'Liberation Serif',serif;font-size:10.7px;color:#000;">UnknownShort: 0003</div>
<div class="t" style="left:979px;top:208px;font-family:'Liberation Serif',serif;font-size:10.7px;color:#000;">UnknownByte: 01</div>
<div class="t" style="left:979px;top:233px;font-family:'Liberation Serif',serif;font-size:10.7px;color:#000;">There are zero threads attached to this script instance.</div>
<div class="t" style="left:979px;top:258px;font-family:'Liberation Serif',serif;font-size:10.7px;color:#000;">There are zero stackframes with member data referring to this script instance.</div>
<div class="t" style="left:979px;top:284px;font-family:'Liberation Serif',serif;font-size:10.7px;color:#000;">There are zero instances with member data referring to this script instance.</div>
<div class="t" style="left:979px;top:309px;font-family:'Liberation Serif',serif;font-size:10.7px;color:#000;">There are zero references with member data referring to this script instance.</div>
<div class="t" style="left:979px;top:335px;font-family:'Liberation Serif',serif;font-size:10.7px;color:#000;">There are zero arrays with member data referring to this script instance.</div>
<div class="t" style="left:979px;top:360px;font-family:'Liberation Serif',serif;font-size:10.7px;color:#000;">There are zero structs with member data referring to this script instance.</div>
<div class="a" style="left:973px;top:702px;width:504px;height:3px;background:#fafafa"></div>
<div class="a" style="left:973px;top:706px;width:504px;height:1px;background:#6a6a6a"></div>
<div class="a" style="left:975px;top:712px;width:499px;height:334px;border:1px solid #a0a0a0;border-right-color:#c4c4c4"></div>
<div class="a" style="left:978px;top:708px;padding:0 2px;height:8px;line-height:8px;background:#f0f0f0;font-size:9px;letter-spacing:-0.25px;color:#000">Data</div>
<div class="a" style="left:977px;top:718px;width:480px;height:19px;background:#fff"></div>
<div class="a" style="left:995px;top:718px;width:1px;height:18px;background:#e5e5e5"></div>
<div class="a" style="left:1085px;top:718px;width:1px;height:18px;background:#e5e5e5"></div>
<div class="a" style="left:1272px;top:718px;width:1px;height:18px;background:#e5e5e5"></div>
<div class="t" style="left:981px;top:722px;font-size:8px;color:#000">#</div>
<div class="t" style="left:999px;top:722px;font-size:8px;color:#000">Type</div>
<div class="t" style="left:1089px;top:722px;font-size:8px;color:#000">Name</div>
<div class="t" style="left:1276px;top:722px;font-size:8px;color:#000">Value</div>
<div class="a" style="left:977px;top:737px;width:482px;height:306px;background:#fff;overflow:hidden">
<div class="a" style="left:0;top:11px;width:481px;height:1px;background:#c0c0c0"></div>
<div class="t" style="left:0;top:0px;width:17px;text-align:right;font-size:8px;color:#000">3</div>
<div class="t" style="left:19px;top:0px;font-size:8px;color:#000">ActorValue[ ]</div>
<div class="t" style="left:109px;top:0px;font-size:8px;color:#000">::DissDeps_var</div>
<div class="t" style="left:296px;top:0px;font-size:8px;color:#000">ActorValue[ ] 0000000000000000</div>
<div class="a" style="left:0;top:23px;width:481px;height:1px;background:#c0c0c0"></div>
<div class="t" style="left:0;top:12px;width:17px;text-align:right;font-size:8px;color:#000">4</div>
<div class="t" style="left:19px;top:12px;font-size:8px;color:#000">lip:api</div>
<div class="t" style="left:109px;top:12px;font-size:8px;color:#000">::LiPAPI_var</div>
<div class="t" style="left:296px;top:12px;font-size:8px;color:#2424e6">REF : 0000000000000000 (lip:api)</div>
<div class="a" style="left:0;top:35px;width:481px;height:1px;background:#c0c0c0"></div>
<div class="t" style="left:0;top:24px;width:17px;text-align:right;font-size:8px;color:#000">5</div>
<div class="t" style="left:19px;top:24px;font-size:8px;color:#000">GlobalVariable</div>
<div class="t" style="left:109px;top:24px;font-size:8px;color:#000">::LiPDDAnalStimulationLevel_var</div>
<div class="t" style="left:296px;top:24px;font-size:8px;color:#2424e6">REF : 0000000000000000 (GlobalVariable)</div>
<div class="a" style="left:0;top:47px;width:481px;height:1px;background:#c0c0c0"></div>
<div class="t" style="left:0;top:36px;width:17px;text-align:right;font-size:8px;color:#000">6</div>
<div class="t" style="left:19px;top:36px;font-size:8px;color:#000">GlobalVariable</div>
<div class="t" style="left:109px;top:36px;font-size:8px;color:#000">::LiPDDGenitalStimulationLevel_var</div>
<div class="t" style="left:296px;top:36px;font-size:8px;color:#2424e6">REF : 0000000000000000 (GlobalVariable)</div>
<div class="a" style="left:0;top:59px;width:481px;height:1px;background:#c0c0c0"></div>
<div class="t" style="left:0;top:48px;width:17px;text-align:right;font-size:8px;color:#000">7</div>
<div class="t" style="left:19px;top:48px;font-size:8px;color:#000">GlobalVariable</div>
<div class="t" style="left:109px;top:48px;font-size:8px;color:#000">::LiPDDNippleStimulationLevel_var</div>
<div class="t" style="left:296px;top:48px;font-size:8px;color:#2424e6">REF : 0000000000000000 (GlobalVariable)</div>
<div class="a" style="left:0;top:71px;width:481px;height:1px;background:#c0c0c0"></div>
<div class="t" style="left:0;top:60px;width:17px;text-align:right;font-size:8px;color:#000">8</div>
<div class="t" style="left:19px;top:60px;font-size:8px;color:#000">GlobalVariable</div>
<div class="t" style="left:109px;top:60px;font-size:8px;color:#000">::LiPDDOralStimulationLevel_var</div>
<div class="t" style="left:296px;top:60px;font-size:8px;color:#2424e6">REF : 0000000000000000 (GlobalVariable)</div>
<div class="a" style="left:0;top:83px;width:481px;height:1px;background:#c0c0c0"></div>
<div class="t" style="left:0;top:72px;width:17px;text-align:right;font-size:8px;color:#000">9</div>
<div class="t" style="left:19px;top:72px;font-size:8px;color:#000">GlobalVariable</div>
<div class="t" style="left:109px;top:72px;font-size:8px;color:#000">::LiPEndOfBattleDissatisfactionMagnitude_var</div>
<div class="t" style="left:296px;top:72px;font-size:8px;color:#2424e6">REF : 0000000000000000 (GlobalVariable)</div>
<div class="a" style="left:0;top:95px;width:481px;height:1px;background:#c0c0c0"></div>
<div class="t" style="left:0;top:84px;width:17px;text-align:right;font-size:8px;color:#000">10</div>
<div class="t" style="left:19px;top:84px;font-size:8px;color:#000">GlobalVariable</div>
<div class="t" style="left:109px;top:84px;font-size:8px;color:#000">::LiPEndOfBattleSelfEsteemMagnitude_var</div>
<div class="t" style="left:296px;top:84px;font-size:8px;color:#2424e6">REF : 0000000000000000 (GlobalVariable)</div>
<div class="a" style="left:0;top:107px;width:481px;height:1px;background:#c0c0c0"></div>
<div class="t" style="left:0;top:96px;width:17px;text-align:right;font-size:8px;color:#000">11</div>
<div class="t" style="left:19px;top:96px;font-size:8px;color:#000">GlobalVariable</div>
<div class="t" style="left:109px;top:96px;font-size:8px;color:#000">::LiPLustWeight_var</div>
<div class="t" style="left:296px;top:96px;font-size:8px;color:#2424e6">REF : 0000000000000000 (GlobalVariable)</div>
<div class="a" style="left:0;top:119px;width:481px;height:1px;background:#c0c0c0"></div>
<div class="t" style="left:0;top:108px;width:17px;text-align:right;font-size:8px;color:#000">12</div>
<div class="t" style="left:19px;top:108px;font-size:8px;color:#000">GlobalVariable</div>
<div class="t" style="left:109px;top:108px;font-size:8px;color:#000">::LiPSelfEsteemToSpiritDecreaseRate_var</div>
<div class="t" style="left:296px;top:108px;font-size:8px;color:#2424e6">REF : 0000000000000000 (GlobalVariable)</div>
<div class="a" style="left:0;top:131px;width:481px;height:1px;background:#c0c0c0"></div>
<div class="t" style="left:0;top:120px;width:17px;text-align:right;font-size:8px;color:#000">13</div>
<div class="t" style="left:19px;top:120px;font-size:8px;color:#000">GlobalVariable</div>
<div class="t" style="left:109px;top:120px;font-size:8px;color:#000">::LiPSelfEsteemToSpiritIncreaseRate_var</div>
<div class="t" style="left:296px;top:120px;font-size:8px;color:#2424e6">REF : 0000000000000000 (GlobalVariable)</div>
<div class="a" style="left:0;top:143px;width:481px;height:1px;background:#c0c0c0"></div>
<div class="t" style="left:0;top:132px;width:17px;text-align:right;font-size:8px;color:#000">14</div>
<div class="t" style="left:19px;top:132px;font-size:8px;color:#000">GlobalVariable</div>
<div class="t" style="left:109px;top:132px;font-size:8px;color:#000">::LiPTraumaToSpiritIncreaseRate_var</div>
<div class="t" style="left:296px;top:132px;font-size:8px;color:#2424e6">REF : 0000000000000000 (GlobalVariable)</div>
<div class="a" style="left:0;top:155px;width:481px;height:1px;background:#c0c0c0"></div>
<div class="t" style="left:0;top:144px;width:17px;text-align:right;font-size:8px;color:#000">15</div>
<div class="t" style="left:19px;top:144px;font-size:8px;color:#000">GlobalVariable</div>
<div class="t" style="left:109px;top:144px;font-size:8px;color:#000">::LiPTraumaToWillpowerDecreaseRate_var</div>
<div class="t" style="left:296px;top:144px;font-size:8px;color:#2424e6">REF : 0000000000000000 (GlobalVariable)</div>
<div class="a" style="left:0;top:167px;width:481px;height:1px;background:#c0c0c0"></div>
<div class="t" style="left:0;top:156px;width:17px;text-align:right;font-size:8px;color:#000">16</div>
<div class="t" style="left:19px;top:156px;font-size:8px;color:#000">GlobalVariable</div>
<div class="t" style="left:109px;top:156px;font-size:8px;color:#000">::LiPWillpowerToTenacityDecreaseRate_var</div>
<div class="t" style="left:296px;top:156px;font-size:8px;color:#2424e6">REF : 0000000000000000 (GlobalVariable)</div>
<div class="a" style="left:0;top:179px;width:481px;height:1px;background:#c0c0c0"></div>
<div class="t" style="left:0;top:168px;width:17px;text-align:right;font-size:8px;color:#000">17</div>
<div class="t" style="left:19px;top:168px;font-size:8px;color:#000">GlobalVariable</div>
<div class="t" style="left:109px;top:168px;font-size:8px;color:#000">::LiPWillpowerToTenacityIncreaseRate_var</div>
<div class="t" style="left:296px;top:168px;font-size:8px;color:#2424e6">REF : 0000000000000000 (GlobalVariable)</div>
<div class="a" style="left:0;top:191px;width:481px;height:1px;background:#c0c0c0"></div>
<div class="t" style="left:0;top:180px;width:17px;text-align:right;font-size:8px;color:#000">18</div>
<div class="t" style="left:19px;top:180px;font-size:8px;color:#000">lip:orgasmshandler</div>
<div class="t" style="left:109px;top:180px;font-size:8px;color:#000">::OrgasmsHandler_var</div>
<div class="t" style="left:296px;top:180px;font-size:8px;color:#2424e6">REF : 0000000000000000 (lip:orgasmshandler)</div>
<div class="a" style="left:0;top:203px;width:481px;height:1px;background:#c0c0c0"></div>
<div class="t" style="left:0;top:192px;width:17px;text-align:right;font-size:8px;color:#000">19</div>
<div class="t" style="left:19px;top:192px;font-size:8px;color:#000">ActorValue</div>
<div class="t" style="left:109px;top:192px;font-size:8px;color:#000">::SelfEsteem_var</div>
<div class="t" style="left:296px;top:192px;font-size:8px;color:#2424e6">REF : 0000000000000000 (ActorValue)</div>
<div class="a" style="left:0;top:215px;width:481px;height:1px;background:#c0c0c0"></div>
<div class="t" style="left:0;top:204px;width:17px;text-align:right;font-size:8px;color:#000">20</div>
<div class="t" style="left:19px;top:204px;font-size:8px;color:#000">ActorValue</div>
<div class="t" style="left:109px;top:204px;font-size:8px;color:#000">::Spirit_var</div>
<div class="t" style="left:296px;top:204px;font-size:8px;color:#2424e6">REF : 0000000000000000 (ActorValue)</div>
<div class="a" style="left:0;top:227px;width:481px;height:1px;background:#c0c0c0"></div>
<div class="t" style="left:0;top:216px;width:17px;text-align:right;font-size:8px;color:#000">21</div>
<div class="t" style="left:19px;top:216px;font-size:8px;color:#000">ActorValue</div>
<div class="t" style="left:109px;top:216px;font-size:8px;color:#000">::Tenacity_var</div>
<div class="t" style="left:296px;top:216px;font-size:8px;color:#2424e6">REF : 0000000000000000 (ActorValue)</div>
<div class="a" style="left:0;top:239px;width:481px;height:1px;background:#c0c0c0"></div>
<div class="t" style="left:0;top:228px;width:17px;text-align:right;font-size:8px;color:#000">22</div>
<div class="t" style="left:19px;top:228px;font-size:8px;color:#000">ActorValue[ ]</div>
<div class="t" style="left:109px;top:228px;font-size:8px;color:#000">::ToListen_var</div>
<div class="t" style="left:296px;top:228px;font-size:8px;color:#000">ActorValue[ ] 0000000000000000</div>
<div class="a" style="left:0;top:251px;width:481px;height:1px;background:#c0c0c0"></div>
<div class="t" style="left:0;top:240px;width:17px;text-align:right;font-size:8px;color:#000">23</div>
<div class="t" style="left:19px;top:240px;font-size:8px;color:#000">ActorValue</div>
<div class="t" style="left:109px;top:240px;font-size:8px;color:#000">::Trauma_var</div>
<div class="t" style="left:296px;top:240px;font-size:8px;color:#2424e6">REF : 0000000000000000 (ActorValue)</div>
<div class="a" style="left:0;top:263px;width:481px;height:1px;background:#c0c0c0"></div>
<div class="t" style="left:0;top:252px;width:17px;text-align:right;font-size:8px;color:#000">24</div>
<div class="t" style="left:19px;top:252px;font-size:8px;color:#000">lip:updatemanager</div>
<div class="t" style="left:109px;top:252px;font-size:8px;color:#000">::UpdateManager_var</div>
<div class="t" style="left:296px;top:252px;font-size:8px;color:#2424e6">REF : 0000000000000000 (lip:updatemanager)</div>
<div class="a" style="left:0;top:275px;width:481px;height:1px;background:#c0c0c0"></div>
<div class="t" style="left:0;top:264px;width:17px;text-align:right;font-size:8px;color:#000">25</div>
<div class="t" style="left:19px;top:264px;font-size:8px;color:#000">lip:wearinghandler</div>
<div class="t" style="left:109px;top:264px;font-size:8px;color:#000">::WearingHandler_var</div>
<div class="t" style="left:296px;top:264px;font-size:8px;color:#2424e6">REF : 0000000000000000 (lip:wearinghandler)</div>
<div class="a" style="left:0;top:287px;width:481px;height:1px;background:#c0c0c0"></div>
<div class="t" style="left:0;top:276px;width:17px;text-align:right;font-size:8px;color:#000">26</div>
<div class="t" style="left:19px;top:276px;font-size:8px;color:#000">ActorValue</div>
<div class="t" style="left:109px;top:276px;font-size:8px;color:#000">::Willpower_var</div>
<div class="t" style="left:296px;top:276px;font-size:8px;color:#2424e6">REF : 0000000000000000 (ActorValue)</div>
<div class="a" style="left:0;top:299px;width:481px;height:1px;background:#c0c0c0"></div>
<div class="t" style="left:0;top:288px;width:17px;text-align:right;font-size:8px;color:#000">27</div>
<div class="t" style="left:19px;top:288px;font-size:8px;color:#000">INTEGER</div>
<div class="t" style="left:109px;top:288px;font-size:8px;color:#000">AlcoIntox</div>
<div class="t" style="left:296px;top:288px;font-size:8px;color:#000">INTEGER:4</div>
<div class="a" style="left:0;top:311px;width:481px;height:1px;background:#c0c0c0"></div>
<div class="t" style="left:0;top:300px;width:17px;text-align:right;font-size:8px;color:#000">28</div>
<div class="t" style="left:19px;top:300px;font-size:8px;color:#000">INTEGER</div>
<div class="t" style="left:109px;top:300px;font-size:8px;color:#000">Anal</div>
<div class="t" style="left:296px;top:300px;font-size:8px;color:#000">INTEGER:1</div>
<div class="a" style="left:18px;top:0;width:1px;height:306px;background:#9a9a9a"></div>
<div class="a" style="left:108px;top:0;width:1px;height:306px;background:#9a9a9a"></div>
<div class="a" style="left:295px;top:0;width:1px;height:306px;background:#9a9a9a"></div>
<div class="a" style="left:481px;top:0;width:1px;height:306px;background:#9a9a9a"></div>
</div>
<div class="a" style="left:1459px;top:737px;width:13px;height:306px;background:#f0f0f0"></div>
<svg class="a" style="left:1461px;top:741px" width="9" height="6"><path d="M1 5L4.5 1.5L8 5" stroke="#555" stroke-width="1.3" fill="none"/></svg>
<div class="a" style="left:1460px;top:770px;width:11px;height:170px;background:#cdcdcd"></div>
<svg class="a" style="left:1461px;top:1034px" width="9" height="6"><path d="M1 1L4.5 4.5L8 1" stroke="#555" stroke-width="1.3" fill="none"/></svg>
<div class="a" style="left:1478px;top:234px;width:437px;height:636px;background:#fff;border-right:1px solid #8a8a8a;border-bottom:1px solid #8a8a8a;box-shadow:2px 2px 6px rgba(0,0,0,0.25)"></div>
<svg class="a" style="left:1820px;top:238px" width="14" height="14"><path d="M1 7H12" stroke="#9a9a9a" stroke-width="1"/></svg>
<svg class="a" style="left:1856px;top:238px" width="14" height="14"><rect x="1.5" y="3.5" width="8" height="8" stroke="#777" stroke-width="1" fill="none"/></svg>
<svg class="a" style="left:1890px;top:238px" width="14" height="14"><path d="M2 2L11 11M11 2L2 11" stroke="#777" stroke-width="1"/></svg>
<svg class="a" style="left:1883px;top:261px" width="10" height="7"><path d="M1 5.5L5 1.5L9 5.5" stroke="#888" stroke-width="1" fill="none"/></svg>
<svg class="a" style="left:1899px;top:258px" width="14" height="14"><circle cx="7" cy="7" r="6.3" fill="#1160c4"/><text x="7" y="10.5" font-size="10" font-weight="bold" text-anchor="middle" fill="#fff" font-family="Liberation Sans">?</text></svg>
<div class="a" style="left:1478px;top:274px;width:435px;height:70px;background:#f5f6f7;border-top:1px solid #dadbdc;border-bottom:1px solid #dadbdc"></div>
<div class="a" style="left:1558px;top:280px;width:1px;height:60px;background:#e2e3e4"></div>
<div class="a" style="left:1645px;top:280px;width:1px;height:60px;background:#e2e3e4"></div>
<svg class="a" style="left:1478px;top:280px" width="16" height="20"><path d="M0 1H8L11 4V19H0" stroke="#8a8a8a" stroke-width="1" fill="#fff"/><path d="M1 12L4 15L9 9" stroke="#e8641e" stroke-width="1.6" fill="none"/></svg>
<div class="t" style="left:1476px;top:305px;font-size:9px;letter-spacing:-0.1px;color:#2a2a2a">perties</div>
<svg class="a" style="left:1480px;top:318px" width="6" height="4"><path d="M0 0H6L3 3Z" fill="#333"/></svg>
<svg class="a" style="left:1507px;top:280px" width="14" height="12"><rect x="0.5" y="1.5" width="12" height="9" stroke="#888" fill="#f0f0f0"/><rect x="3" y="4" width="3" height="5" fill="#1c6fd1"/><path d="M7.5 5H11M7.5 7H11" stroke="#888"/></svg>
<div class="t" style="left:1522px;top:280px;font-size:9px;letter-spacing:-0.1px;color:#2a2a2a">Open</div>
<svg class="a" style="left:1546px;top:284px" width="6" height="4"><path d="M0 0H6L3 3Z" fill="#333"/></svg>
<svg class="a" style="left:1508px;top:295px" width="11" height="13"><path d="M1 1H7L10 4V12H1Z" stroke="#9fb4d8" fill="#eef3fb"/></svg>
<div class="t" style="left:1522px;top:296px;font-size:9px;letter-spacing:-0.1px;color:#8a8a8a">Edit</div>
<svg class="a" style="left:1507px;top:312px" width="14" height="14"><rect x="0.5" y="0.5" width="8" height="9" fill="#f5d76e"/><circle cx="8.5" cy="8.5" r="4" fill="#f2f2f2" stroke="#888"/><path d="M1 9L4 7V11Z" fill="#2fa84f"/></svg>
<div class="t" style="left:1522px;top:313px;font-size:9px;letter-spacing:-0.1px;color:#2a2a2a">History</div>
<div class="t" style="left:1497px;top:330px;font-size:9px;color:#555">Open</div>
<svg class="a" style="left:1564px;top:279px" width="14" height="14"><rect x="0.5" y="0.5" width="6" height="6" fill="#9fcdf5" stroke="#3b8ee0"/><rect x="7" y="0.5" width="6" height="6" fill="#9fcdf5" stroke="#3b8ee0"/><rect x="0.5" y="7" width="6" height="6" fill="#9fcdf5" stroke="#3b8ee0"/><rect x="7" y="7" width="6" height="6" fill="#9fcdf5" stroke="#3b8ee0"/></svg>
<div class="t" style="left:1579px;top:280px;font-size:9px;letter-spacing:-0.1px;color:#2a2a2a">Select all</div>
<svg class="a" style="left:1565px;top:296px" width="12" height="12"><rect x="0.5" y="0.5" width="4" height="4" fill="none" stroke="#999"/><rect x="7" y="0.5" width="4" height="4" fill="none" stroke="#999"/><rect x="0.5" y="7" width="4" height="4" fill="none" stroke="#999"/><rect x="7" y="7" width="4" height="4" fill="none" stroke="#999"/></svg>
<div class="t" style="left:1579px;top:296px;font-size:9px;letter-spacing:-0.1px;color:#2a2a2a">Select none</div>
<svg class="a" style="left:1564px;top:312px" width="14" height="14"><rect x="0.5" y="0.5" width="5" height="5" fill="none" stroke="#999"/><rect x="7" y="0.5" width="6" height="6" fill="#9fcdf5" stroke="#3b8ee0"/><rect x="0.5" y="7" width="6" height="6" fill="#9fcdf5" stroke="#3b8ee0"/><rect x="7.5" y="7.5" width="5" height="5" fill="none" stroke="#999"/></svg>
<div class="t" style="left:1579px;top:313px;font-size:9px;letter-spacing:-0.1px;color:#2a2a2a">Invert selection</div>
<div class="t" style="left:1590px;top:330px;font-size:9px;color:#555">Select</div>
<div class="a" style="left:1478px;top:348px;width:258px;height:17px;border:1px solid #d9d9d9;border-left:none;background:#fff"></div>
<div class="a" style="left:1730px;top:348px;width:1px;height:17px;background:#e5e5e5"></div>
<div class="t" style="left:1477px;top:350px;font-size:9.2px;color:#1e1e1e">mmon</div>
<svg class="a" style="left:1506px;top:353px" width="5" height="7"><path d="M1 1L3.5 3.5L1 6" stroke="#777" fill="none"/></svg>
<div class="t" style="left:1517px;top:350px;font-size:9.2px;letter-spacing:-0.1px;color:#1e1e1e">Fallout 4</div>
<svg class="a" style="left:1720px;top:353px" width="9" height="6"><path d="M1 1L4.5 4.5L8 1" stroke="#555" stroke-width="1.2" fill="none"/></svg>
<svg class="a" style="left:1733px;top:350px" width="11" height="12"><path d="M8.5 4A3.8 3.8 0 1 1 5.5 2.5" stroke="#666" stroke-width="1.2" fill="none"/><path d="M4.5 0.5V4.5H1.5" stroke="#666" stroke-width="0" fill="#666"/></svg>
<div class="a" style="left:1753px;top:348px;width:152px;height:17px;border:1px solid #d9d9d9;background:#fff"></div>
<div class="t" style="left:1760px;top:350px;font-size:9.2px;letter-spacing:-0.1px;color:#6d6d6d">Search Fallout 4</div>
<svg class="a" style="left:1889px;top:352px" width="10" height="10"><circle cx="6" cy="4" r="3" stroke="#444" stroke-width="1.1" fill="none"/><path d="M4 6L1 9" stroke="#444" stroke-width="1.3"/></svg>
<div class="a" style="left:1478px;top:366px;width:424px;height:21px;background:#fff"></div>
<div class="a" style="left:1519px;top:370px;width:1px;height:17px;background:#e5e5e5"></div>
<div class="a" style="left:1665px;top:370px;width:1px;height:17px;background:#e5e5e5"></div>
<div class="a" style="left:1725px;top:370px;width:1px;height:17px;background:#e5e5e5"></div>
<div class="t" style="left:1524px;top:374px;font-size:9px;color:#4c607a">Type</div>
<div class="t" style="left:1671px;top:374px;font-size:9px;color:#4c607a">Size</div>
<div class="a" style="left:1478px;top:387px;width:424px;height:466px;overflow:hidden">
<div class="t" style="left:2px;top:-5px;font-size:9px;color:#6d6d6d">AM</div>
<div class="t" style="left:46px;top:-5px;font-size:9px;letter-spacing:-0.05px;color:#6d6d6d">Application extension</div>
<div class="t" style="left:150px;top:-5px;width:93px;text-align:right;font-size:9px;color:#6d6d6d">556 KB</div>
<div class="t" style="left:2px;top:10px;font-size:9px;color:#6d6d6d">AM</div>
<div class="t" style="left:46px;top:10px;font-size:9px;letter-spacing:-0.05px;color:#6d6d6d">Configuration settings</div>
<div class="t" style="left:150px;top:10px;width:93px;text-align:right;font-size:9px;color:#6d6d6d">2 KB</div>
<div class="t" style="left:2px;top:26px;font-size:9px;color:#6d6d6d">PM</div>
<div class="t" style="left:46px;top:26px;font-size:9px;letter-spacing:-0.05px;color:#6d6d6d">Configuration settings</div>
<div class="t" style="left:150px;top:26px;width:93px;text-align:right;font-size:9px;color:#6d6d6d">1 KB</div>
<div class="t" style="left:2px;top:42px;font-size:9px;color:#6d6d6d">AM</div>
<div class="t" style="left:46px;top:42px;font-size:9px;letter-spacing:-0.05px;color:#6d6d6d">VDF File</div>
<div class="t" style="left:150px;top:42px;width:93px;text-align:right;font-size:9px;color:#6d6d6d">1 KB</div>
<div class="t" style="left:-1px;top:58px;font-size:9px;color:#6d6d6d">9 AM</div>
<div class="t" style="left:46px;top:58px;font-size:9px;letter-spacing:-0.05px;color:#6d6d6d">Application extension</div>
<div class="t" style="left:150px;top:58px;width:93px;text-align:right;font-size:9px;color:#6d6d6d">5,618 KB</div>
<div class="t" style="left:-3px;top:73px;font-size:9px;color:#6d6d6d">AM</div>
<div class="t" style="left:46px;top:73px;font-size:9px;letter-spacing:-0.05px;color:#6d6d6d">Text Document</div>
<div class="t" style="left:150px;top:73px;width:93px;text-align:right;font-size:9px;color:#6d6d6d">12 KB</div>
<div class="t" style="left:2px;top:89px;font-size:9px;color:#6d6d6d">AM</div>
<div class="t" style="left:46px;top:89px;font-size:9px;letter-spacing:-0.05px;color:#6d6d6d">Configuration settings</div>
<div class="t" style="left:150px;top:89px;width:93px;text-align:right;font-size:9px;color:#6d6d6d">2 KB</div>
<div class="t" style="left:2px;top:105px;font-size:9px;color:#6d6d6d">AM</div>
<div class="t" style="left:46px;top:105px;font-size:9px;letter-spacing:-0.05px;color:#6d6d6d">Configuration settings</div>
<div class="t" style="left:150px;top:105px;width:93px;text-align:right;font-size:9px;color:#6d6d6d">2 KB</div>
<div class="t" style="left:-3px;top:120px;font-size:9px;color:#6d6d6d">PM</div>
<div class="t" style="left:46px;top:120px;font-size:9px;letter-spacing:-0.05px;color:#6d6d6d">Text Document</div>
<div class="t" style="left:150px;top:120px;width:93px;text-align:right;font-size:9px;color:#6d6d6d">4 KB</div>
<div class="t" style="left:2px;top:136px;font-size:9px;color:#6d6d6d">AM</div>
<div class="t" style="left:46px;top:136px;font-size:9px;letter-spacing:-0.05px;color:#6d6d6d">Application extension</div>
<div class="t" style="left:150px;top:136px;width:93px;text-align:right;font-size:9px;color:#6d6d6d">646 KB</div>
<div class="t" style="left:2px;top:152px;font-size:9px;color:#6d6d6d">AM</div>
<div class="t" style="left:46px;top:152px;font-size:9px;letter-spacing:-0.05px;color:#6d6d6d">Application extension</div>
<div class="t" style="left:150px;top:152px;width:93px;text-align:right;font-size:9px;color:#6d6d6d">830 KB</div>
<div class="t" style="left:2px;top:168px;font-size:9px;color:#6d6d6d">AM</div>
<div class="t" style="left:46px;top:168px;font-size:9px;letter-spacing:-0.05px;color:#6d6d6d">Text Document</div>
<div class="t" style="left:150px;top:168px;width:93px;text-align:right;font-size:9px;color:#6d6d6d">7 KB</div>
<div class="t" style="left:2px;top:183px;font-size:9px;color:#6d6d6d">AM</div>
<div class="t" style="left:46px;top:183px;font-size:9px;letter-spacing:-0.05px;color:#6d6d6d">Application extension</div>
<div class="t" style="left:150px;top:183px;width:93px;text-align:right;font-size:9px;color:#6d6d6d">42 KB</div>
<div class="t" style="left:-3px;top:199px;font-size:9px;color:#6d6d6d">PM</div>
<div class="t" style="left:46px;top:199px;font-size:9px;letter-spacing:-0.05px;color:#6d6d6d">Microsoft Edge HTML Document</div>
<div class="t" style="left:150px;top:199px;width:93px;text-align:right;font-size:9px;color:#6d6d6d">8 KB</div>
<div class="t" style="left:-3px;top:215px;font-size:9px;color:#6d6d6d">AM</div>
<div class="t" style="left:46px;top:215px;font-size:9px;letter-spacing:-0.05px;color:#6d6d6d">Text Document</div>
<div class="t" style="left:150px;top:215px;width:93px;text-align:right;font-size:9px;color:#6d6d6d">3 KB</div>
<div class="t" style="left:-3px;top:230px;font-size:9px;color:#6d6d6d">PM</div>
<div class="t" style="left:46px;top:230px;font-size:9px;letter-spacing:-0.05px;color:#6d6d6d">Windows Batch File</div>
<div class="t" style="left:150px;top:230px;width:93px;text-align:right;font-size:9px;color:#6d6d6d">1 KB</div>
<div class="a" style="left:0;top:245px;width:246px;height:16px;background:#d9d9d9"></div>
<div class="t" style="left:-3px;top:246px;font-size:9px;color:#6d6d6d">AM</div>
<div class="t" style="left:46px;top:246px;font-size:9px;letter-spacing:-0.05px;color:#6d6d6d">Application</div>
<div class="t" style="left:150px;top:246px;width:93px;text-align:right;font-size:9px;color:#6d6d6d">78 KB</div>
<div class="t" style="left:2px;top:262px;font-size:9px;color:#6d6d6d">PM</div>
<div class="t" style="left:46px;top:262px;font-size:9px;letter-spacing:-0.05px;color:#6d6d6d">Configuration settings</div>
<div class="t" style="left:150px;top:262px;width:93px;text-align:right;font-size:9px;color:#6d6d6d">3 KB</div>
<div class="t" style="left:-3px;top:278px;font-size:9px;color:#6d6d6d">PM</div>
<div class="t" style="left:46px;top:278px;font-size:9px;letter-spacing:-0.05px;color:#6d6d6d">Text Document</div>
<div class="t" style="left:150px;top:278px;width:93px;text-align:right;font-size:9px;color:#6d6d6d">9 KB</div>
<div class="t" style="left:2px;top:293px;font-size:9px;color:#6d6d6d">PM</div>
<div class="t" style="left:46px;top:293px;font-size:9px;letter-spacing:-0.05px;color:#6d6d6d">Configuration settings</div>
<div class="t" style="left:150px;top:293px;width:93px;text-align:right;font-size:9px;color:#6d6d6d">3 KB</div>
<div class="t" style="left:2px;top:309px;font-size:9px;color:#6d6d6d">PM</div>
<div class="t" style="left:46px;top:309px;font-size:9px;letter-spacing:-0.05px;color:#6d6d6d">Text Document</div>
<div class="t" style="left:150px;top:309px;width:93px;text-align:right;font-size:9px;color:#6d6d6d">8 KB</div>
<div class="t" style="left:2px;top:325px;font-size:9px;color:#6d6d6d">PM</div>
<div class="t" style="left:46px;top:325px;font-size:9px;letter-spacing:-0.05px;color:#6d6d6d">Configuration settings</div>
<div class="t" style="left:150px;top:325px;width:93px;text-align:right;font-size:9px;color:#6d6d6d">1 KB</div>
<div class="t" style="left:-3px;top:341px;font-size:9px;color:#6d6d6d">AM</div>
<div class="t" style="left:46px;top:341px;font-size:9px;letter-spacing:-0.05px;color:#6d6d6d">Application extension</div>
<div class="t" style="left:150px;top:341px;width:93px;text-align:right;font-size:9px;color:#6d6d6d">329 KB</div>
<div class="t" style="left:2px;top:356px;font-size:9px;color:#6d6d6d">AM</div>
<div class="t" style="left:46px;top:356px;font-size:9px;letter-spacing:-0.05px;color:#6d6d6d">Application extension</div>
<div class="t" style="left:150px;top:356px;width:93px;text-align:right;font-size:9px;color:#6d6d6d">202 KB</div>
<div class="t" style="left:-3px;top:372px;font-size:9px;color:#6d6d6d">PM</div>
<div class="t" style="left:46px;top:372px;font-size:9px;letter-spacing:-0.05px;color:#6d6d6d">Text Document</div>
<div class="t" style="left:150px;top:372px;width:93px;text-align:right;font-size:9px;color:#6d6d6d">300 KB</div>
<div class="t" style="left:-3px;top:388px;font-size:9px;color:#6d6d6d">PM</div>
<div class="t" style="left:46px;top:388px;font-size:9px;letter-spacing:-0.05px;color:#6d6d6d">Text Document</div>
<div class="t" style="left:150px;top:388px;width:93px;text-align:right;font-size:9px;color:#6d6d6d">442 KB</div>
<div class="t" style="left:-3px;top:403px;font-size:9px;color:#6d6d6d">PM</div>
<div class="t" style="left:46px;top:403px;font-size:9px;letter-spacing:-0.05px;color:#6d6d6d">Text Document</div>
<div class="t" style="left:150px;top:403px;width:93px;text-align:right;font-size:9px;color:#6d6d6d">64 KB</div>
<div class="t" style="left:2px;top:419px;font-size:9px;color:#6d6d6d">AM</div>
<div class="t" style="left:46px;top:419px;font-size:9px;letter-spacing:-0.05px;color:#6d6d6d">Configuration settings</div>
<div class="t" style="left:150px;top:419px;width:93px;text-align:right;font-size:9px;color:#6d6d6d">2 KB</div>
<div class="t" style="left:-3px;top:435px;font-size:9px;color:#6d6d6d">PM</div>
<div class="t" style="left:46px;top:435px;font-size:9px;letter-spacing:-0.05px;color:#6d6d6d">Text Document</div>
<div class="t" style="left:150px;top:435px;width:93px;text-align:right;font-size:9px;color:#6d6d6d">4 KB</div>
<div class="t" style="left:-3px;top:451px;font-size:9px;color:#6d6d6d">PM</div>
<div class="t" style="left:46px;top:451px;font-size:9px;letter-spacing:-0.05px;color:#6d6d6d">Microsoft Edge HTML Document</div>
<div class="t" style="left:150px;top:451px;width:93px;text-align:right;font-size:9px;color:#6d6d6d">6 KB</div>
</div>
<div class="a" style="left:1478px;top:234px;width:14px;height:636px;background:linear-gradient(90deg,rgba(0,0,0,0.15),rgba(0,0,0,0))"></div>
<div class="a" style="left:1902px;top:370px;width:11px;height:484px;background:#f0f0f0"></div>
<svg class="a" style="left:1903px;top:372px" width="9" height="6"><path d="M1 5L4.5 1.5L8 5" stroke="#555" stroke-width="1.3" fill="none"/></svg>
<div class="a" style="left:1902px;top:683px;width:11px;height:157px;background:#cdcdcd"></div>
<svg class="a" style="left:1903px;top:844px" width="9" height="6"><path d="M1 1L4.5 4.5L8 1" stroke="#555" stroke-width="1.3" fill="none"/></svg>
<div class="a" style="left:1878px;top:853px;width:17px;height:17px;background:#cce8ff;border:1px solid #3ea0e8"></div>
<svg class="a" style="left:1881px;top:857px" width="11" height="9"><path d="M1 0.5V8.5M3.5 1.5H6M7.5 1.5H10M3.5 4.5H6M7.5 4.5H10M3.5 7.5H6M7.5 7.5H10" stroke="#666" stroke-width="1"/></svg>
<div class="a" style="left:1897px;top:856px;width:11px;height:9px;background:linear-gradient(#3b82e8,#4a9a6a);border:1px solid #aaa"></div>
<div class="a" style="left:0;top:1050px;width:1920px;height:30px;background:#0b1e2d"></div>
<svg class="a" style="left:12px;top:1058px" width="14" height="14"><path d="M0 2L6 1V6.5H0Z M7 0.8L14 0V6.5H7Z M0 7.5H6V13L0 12Z M7 7.5H14V14L7 13.2Z" fill="#fff"/></svg>
<svg class="a" style="left:47px;top:1056px" width="18" height="18"><ellipse cx="9" cy="9" rx="8" ry="8" stroke="#e6204a" stroke-width="1.6" fill="none"/><ellipse cx="9" cy="9" rx="4" ry="7" stroke="#e6204a" stroke-width="1.5" fill="none"/></svg>
<div class="a" style="left:41px;top:1078px;width:30px;height:2px;background:#8fb8dc"></div>
<svg class="a" style="left:84px;top:1056px" width="18" height="18"><circle cx="9" cy="9" r="8.5" fill="#1a3a6a"/><circle cx="11.5" cy="6.5" r="3" stroke="#fff" stroke-width="1.2" fill="none"/><path d="M1 10L8 12.5" stroke="#fff" stroke-width="2"/><circle cx="6.5" cy="12" r="2" fill="#fff"/></svg>
<div class="a" style="left:78px;top:1078px;width:30px;height:2px;background:#8fb8dc"></div>
<svg class="a" style="left:121px;top:1057px" width="18" height="15"><path d="M0.5 1.5H7L8.5 3H17.5V14.5H0.5Z" fill="#f4c542"/><rect x="0.5" y="5" width="17" height="9.5" fill="#fbd565"/><rect x="5" y="9" width="8" height="5" fill="#2d7ad6"/></svg>
<div class="a" style="left:115px;top:1078px;width:30px;height:2px;background:#8fb8dc"></div>
<div class="a" style="left:149px;top:1050px;width:36px;height:30px;background:#1d4f7a"></div>
<svg class="a" style="left:157px;top:1058px" width="18" height="14"><rect x="0.5" y="0.5" width="17" height="13" fill="#3a2f22"/><circle cx="6" cy="7" r="5" fill="#8a6a3c"/><circle cx="6" cy="7" r="1.5" fill="#d8c090"/><rect x="12" y="3" width="4" height="8" fill="#5a5040"/></svg>
<div class="a" style="left:149px;top:1078px;width:36px;height:2px;background:#8fb8dc"></div>
<svg class="a" style="left:1756px;top:1059px" width="10" height="7"><path d="M1 6L5 1.5L9 6" stroke="#fff" stroke-width="1.1" fill="none"/></svg>
<svg class="a" style="left:1771px;top:1058px" width="14" height="12"><rect x="3.5" y="1.5" width="9" height="7" stroke="#fff" fill="none"/><rect x="0.5" y="0.5" width="3" height="3" stroke="#fff" fill="none"/><path d="M8 8.5V10.5M3 11H12M1 3.5V10.5" stroke="#fff"/></svg>
<svg class="a" style="left:1789px;top:1058px" width="13" height="12"><path d="M1 4H3.5L7 1V11L3.5 8H1Z" stroke="#fff" fill="none"/><path d="M8.5 4Q10 6 8.5 8M10 2.5Q12.5 6 10 9.5" stroke="#ccc" fill="none"/></svg>
<div class="t" style="left:1810px;top:1058px;font-size:9.5px;color:#fff">РУС</div>
<div class="t" style="left:1840px;top:1052px;font-size:9.5px;letter-spacing:-0.2px;color:#fff">9:30 PM</div>
<div class="t" style="left:1836px;top:1066px;font-size:9.5px;letter-spacing:-0.2px;color:#fff">3/29/2024</div>
<svg class="a" style="left:1888px;top:1058px" width="20" height="18"><path d="M0.5 0.5H13.5V10.5H6L3 13V10.5H0.5Z" fill="#fff"/><path d="M3 3H11M3 5.5H11M3 8H9" stroke="#888"/><circle cx="14.5" cy="12" r="5" fill="#1656a8" stroke="#0b1e2d"/><text x="14.5" y="15.5" font-size="8" fill="#fff" text-anchor="middle" font-family="Liberation Sans">1</text></svg>
<div class="a" style="left:1915px;top:1050px;width:1px;height:30px;background:#6c7a86"></div>
</body></html>
